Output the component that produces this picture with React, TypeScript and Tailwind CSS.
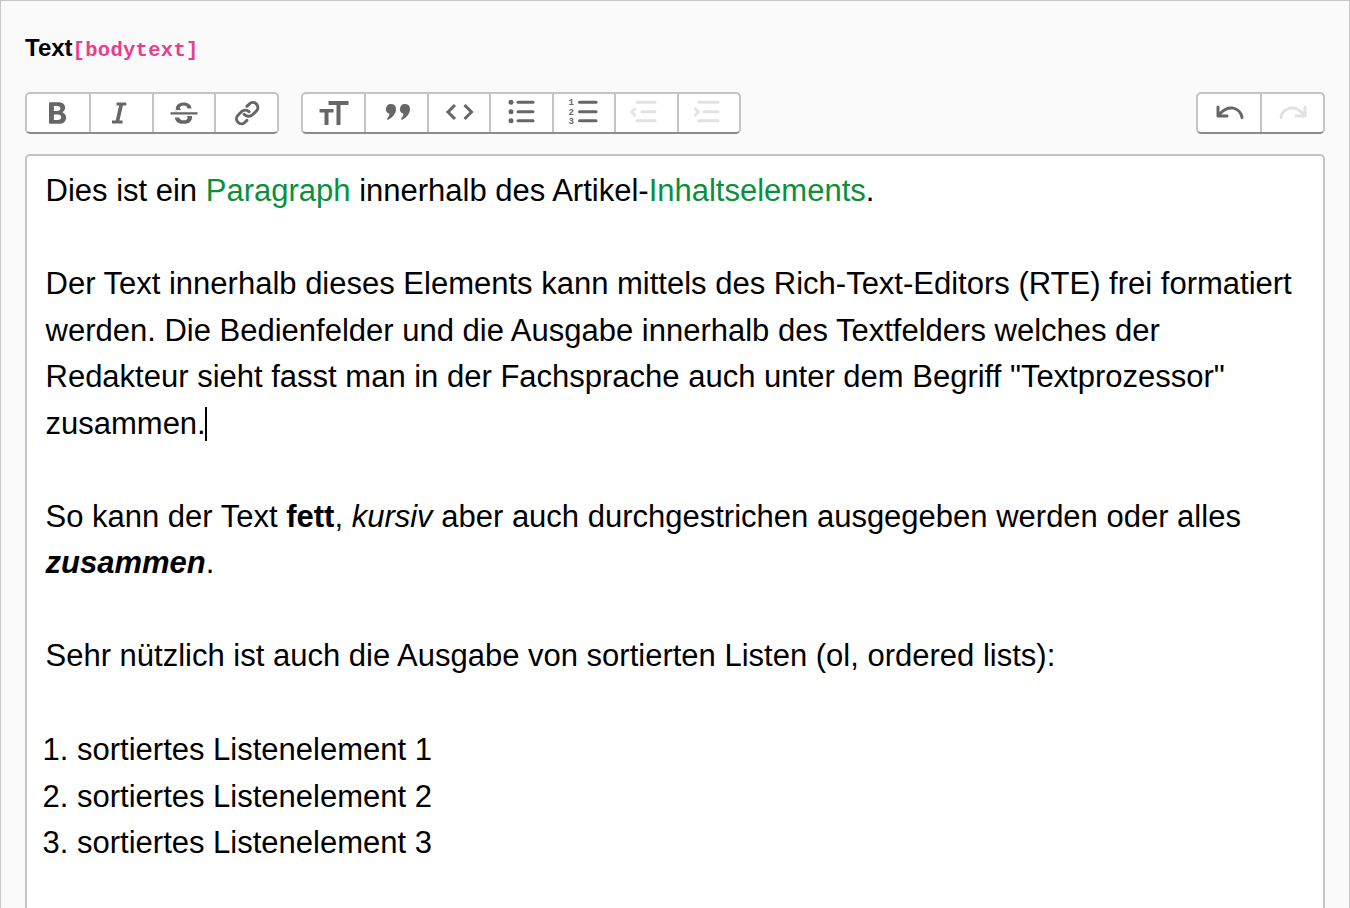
import type { ReactNode } from 'react'

const Trix = ({ d, flip }: { d: string; flip?: boolean }) => (
  <g transform={flip ? 'translate(36 0) scale(-1.5 1.5)' : 'scale(1.5)'}>
    <path d={d} />
  </g>
)

const Line = ({ x1, x2, y }: { x1: number; x2: number; y: number }) => (
  <line x1={x1} x2={x2} y1={y} y2={y} stroke="currentColor" strokeWidth="3" strokeLinecap="round" />
)

const undoPath = 'M3 14a1 1 0 0 0 1 1h6a1 1 0 1 0 0-2H6.257c2.247-2.764 5.151-3.668 7.579-3.264 2.589.432 4.739 2.356 5.174 5.405a1 1 0 0 0 1.98-.283c-.564-3.95-3.415-6.526-6.825-7.095C11.084 7.25 7.63 8.377 5 11.39V8a1 1 0 0 0-2 0v6Z'
const commaPath = 'M15.5 14a5 5 0 1 0-6.5 4.8c-.3 2-1 3.5-2.5 5l.8 1.2c4.5-2.5 8.2-6 8.2-11z'

const icons: Record<string, ReactNode> = {
  bold: <Trix d="M6.522 19.242a.5.5 0 0 1-.5-.5V5.35a.5.5 0 0 1 .5-.5h5.783c1.347 0 2.46.345 3.24.982.783.64 1.216 1.562 1.216 2.683 0 1.13-.587 2.129-1.476 2.71a.35.35 0 0 0 .049.613c1.259.56 2.101 1.742 2.101 3.22 0 1.282-.483 2.334-1.363 3.063-.876.726-2.132 1.12-3.66 1.12h-5.89ZM9.27 7.347v3.362h1.97c.766 0 1.347-.17 1.733-.464.38-.291.587-.716.587-1.27 0-.53-.183-.928-.513-1.198-.334-.273-.838-.43-1.505-.43H9.27Zm0 5.606v3.791h2.389c.832 0 1.448-.176 1.853-.497.399-.315.614-.786.614-1.423 0-.62-.22-1.077-.63-1.385-.418-.313-1.053-.486-1.905-.486H9.27Z" />,
  italic: <Trix d="M9 5h6.5v2h-2.23l-2.31 10H13v2H6v-2h2.461l2.306-10H9V5Z" />,
  strike: <Trix d="M6 14.986c.088 2.647 2.246 4.258 5.635 4.258 3.496 0 5.713-1.728 5.713-4.463 0-.275-.02-.536-.062-.781h-3.461c.398.293.573.654.573 1.123 0 1.035-1.074 1.787-2.646 1.787-1.563 0-2.773-.762-2.91-1.924H6ZM6.432 10h3.763c-.632-.314-.914-.715-.914-1.273 0-1.045.977-1.739 2.432-1.739 1.475 0 2.526.785 2.622 2.02h2.625c-.06-2.432-2.028-4.05-5.162-4.05-3.103 0-5.248 1.646-5.248 4.12 0 .7.144 1.32.432 1.922H6.432ZM3 11.5h18v1.5H3v-1.5Z" />,
  link: <Trix d="M18.948 5.258a4.337 4.337 0 0 0-6.108 0L11.217 6.87a.993.993 0 0 0 0 1.41c.392.39 1.027.39 1.418 0l1.623-1.613a2.323 2.323 0 0 1 3.271 0 2.29 2.29 0 0 1 0 3.251l-2.393 2.38a3.021 3.021 0 0 1-4.255 0l-.05-.049a1.007 1.007 0 0 0-1.418 0 .993.993 0 0 0 0 1.41l.05.049a5.036 5.036 0 0 0 7.091 0l2.394-2.38a4.275 4.275 0 0 0 0-6.072Zm-13.683 13.6a4.337 4.337 0 0 0 6.108 0l1.262-1.255a.993.993 0 0 0 0-1.41 1.007 1.007 0 0 0-1.418 0L9.954 17.45a2.323 2.323 0 0 1-3.27 0 2.29 2.29 0 0 1 0-3.251l2.344-2.331a2.579 2.579 0 0 1 3.631 0c.392.39 1.027.39 1.419 0a.993.993 0 0 0 0-1.41 4.593 4.593 0 0 0-6.468 0l-2.345 2.33a4.275 4.275 0 0 0 0 6.072Z" />,
  heading: <path d="M12.5 6h20v4h-8v20h-4V10h-8zM3.5 14h14v3.5h-5V30h-4V17.5h-5z" />,
  quote: (
    <>
      <path transform="translate(1.5 0)" d={commaPath} />
      <path transform="translate(15.5 0)" d={commaPath} />
    </>
  ),
  code: (
    <g fill="none" stroke="currentColor" strokeWidth="3">
      <path d="M14 10 7 17l7 7" />
      <path d="M23.5 10l7 7-7 7" />
    </g>
  ),
  bullets: (
    <>
      <circle cx="8" cy="7.3" r="2.5" />
      <circle cx="8" cy="16.7" r="2.5" />
      <circle cx="8" cy="25.7" r="2.5" />
      <Line x1={15} x2={30} y={7.3} />
      <Line x1={15} x2={30} y={16.7} />
      <Line x1={15} x2={30} y={25.7} />
    </>
  ),
  numbers: (
    <>
      <text x="2.5" y="10" className="font-['Liberation_Mono',monospace] text-[9px] font-bold">1</text>
      <text x="2.5" y="19.5" className="font-['Liberation_Mono',monospace] text-[9px] font-bold">2</text>
      <text x="2.5" y="28.5" className="font-['Liberation_Mono',monospace] text-[9px] font-bold">3</text>
      <Line x1={13.5} x2={30} y={7.3} />
      <Line x1={13.5} x2={30} y={16.7} />
      <Line x1={13.5} x2={30} y={25.7} />
    </>
  ),
  outdent: (
    <>
      <Line x1={9} x2={27} y={7.3} />
      <Line x1={14} x2={27} y={16.7} />
      <Line x1={9} x2={27} y={25.7} />
      <path d="M7.5 13 3.5 17l4 4" fill="none" stroke="currentColor" strokeWidth="2.5" />
    </>
  ),
  indent: (
    <>
      <Line x1={8} x2={27} y={7.3} />
      <Line x1={13} x2={27} y={16.7} />
      <Line x1={8} x2={27} y={25.7} />
      <path d="M3.5 13l4 4-4 4" fill="none" stroke="currentColor" strokeWidth="2.5" />
    </>
  ),
  undo: <Trix d={undoPath} />,
  redo: <Trix d={undoPath} flip />,
}

const ToolButton = ({ icon, disabled }: { icon: string; disabled?: boolean }) => (
  <button className={`flex flex-1 items-center justify-center border-l-2 border-[#c4c4c4] first:border-l-0 ${disabled ? 'text-[#e2e2e2]' : 'text-[#666666]'}`}>
    <svg width="36" height="36" viewBox="0 0 36 36" fill="currentColor">
      {icons[icon]}
    </svg>
  </button>
)

const ToolGroup = ({ width, items }: { width: string; items: { icon: string; disabled?: boolean }[] }) => (
  <div className={`flex h-[42px] ${width} rounded-[5px] border-2 border-[#c4c4c4] border-b-[#8c8c8c] bg-white pl-px`}>
    {items.map(item => (
      <ToolButton key={item.icon} icon={item.icon} disabled={item.disabled} />
    ))}
  </div>
)

const App = () => {
  return (
    <div className="flex h-[908px] flex-col overflow-hidden border border-b-0 border-[#c8c8c8] bg-[#fafafa] px-6 pt-[32px] font-['Liberation_Sans',sans-serif] text-black">
      {/* Field label */}
      <div className="flex h-[34px] items-center">
        <span className="-translate-y-[2px] text-[24px] font-bold">Text</span>
        <code className="translate-y-px font-['Liberation_Mono',monospace] text-[20.5px] font-bold tracking-[0.3px] text-[#e83e8c]">[bodytext]</code>
      </div>

      {/* Toolbar */}
      <div className="mt-[25px] flex justify-between">
        <div className="flex gap-[22px]">
          <ToolGroup width="w-[254px]" items={[{ icon: 'bold' }, { icon: 'italic' }, { icon: 'strike' }, { icon: 'link' }]} />
          <ToolGroup
            width="w-[440px]"
            items={[
              { icon: 'heading' },
              { icon: 'quote' },
              { icon: 'code' },
              { icon: 'bullets' },
              { icon: 'numbers' },
              { icon: 'outdent', disabled: true },
              { icon: 'indent', disabled: true },
            ]}
          />
        </div>
        <ToolGroup width="w-[129px]" items={[{ icon: 'undo' }, { icon: 'redo', disabled: true }]} />
      </div>

      {/* Editor */}
      <div className="mt-[20px] flex-1 rounded-t-[5px] border-2 border-b-0 border-[#c4c4c4] bg-white pl-[18.5px] pr-6 pt-[12px] text-[31px] leading-[46.5px]">
        <div>
          Dies ist ein <span className="text-[#0a8f3c]">Paragraph</span> innerhalb des Artikel-<span className="text-[#0a8f3c]">Inhaltselements</span>.
          <br />
          <br />
          Der Text innerhalb dieses Elements kann mittels des Rich-Text-Editors (RTE) frei formatiert werden. Die Bedienfelder und die Ausgabe innerhalb des Textfelders welches der Redakteur sieht fasst man in der Fachsprache auch unter dem Begriff "Textprozessor" zusammen.
          <span className="-ml-px -mt-[3px] inline-block h-[34px] w-[2px] bg-black align-middle" />
          <br />
          <br />
          So kann der Text <strong>fett</strong>, <em>kursiv</em> aber auch durchgestrichen ausgegeben werden oder alles <strong><em>zusammen</em></strong>.
          <br />
          <br />
          Sehr nützlich ist auch die Ausgabe von sortierten Listen (ol, ordered lists):
          <br />
          <br />
        </div>
        <ol className="mt-px list-decimal pl-[31.5px]">
          <li>sortiertes Listenelement 1</li>
          <li>sortiertes Listenelement 2</li>
          <li>sortiertes Listenelement 3</li>
        </ol>
      </div>
    </div>
  )
}

export default App
